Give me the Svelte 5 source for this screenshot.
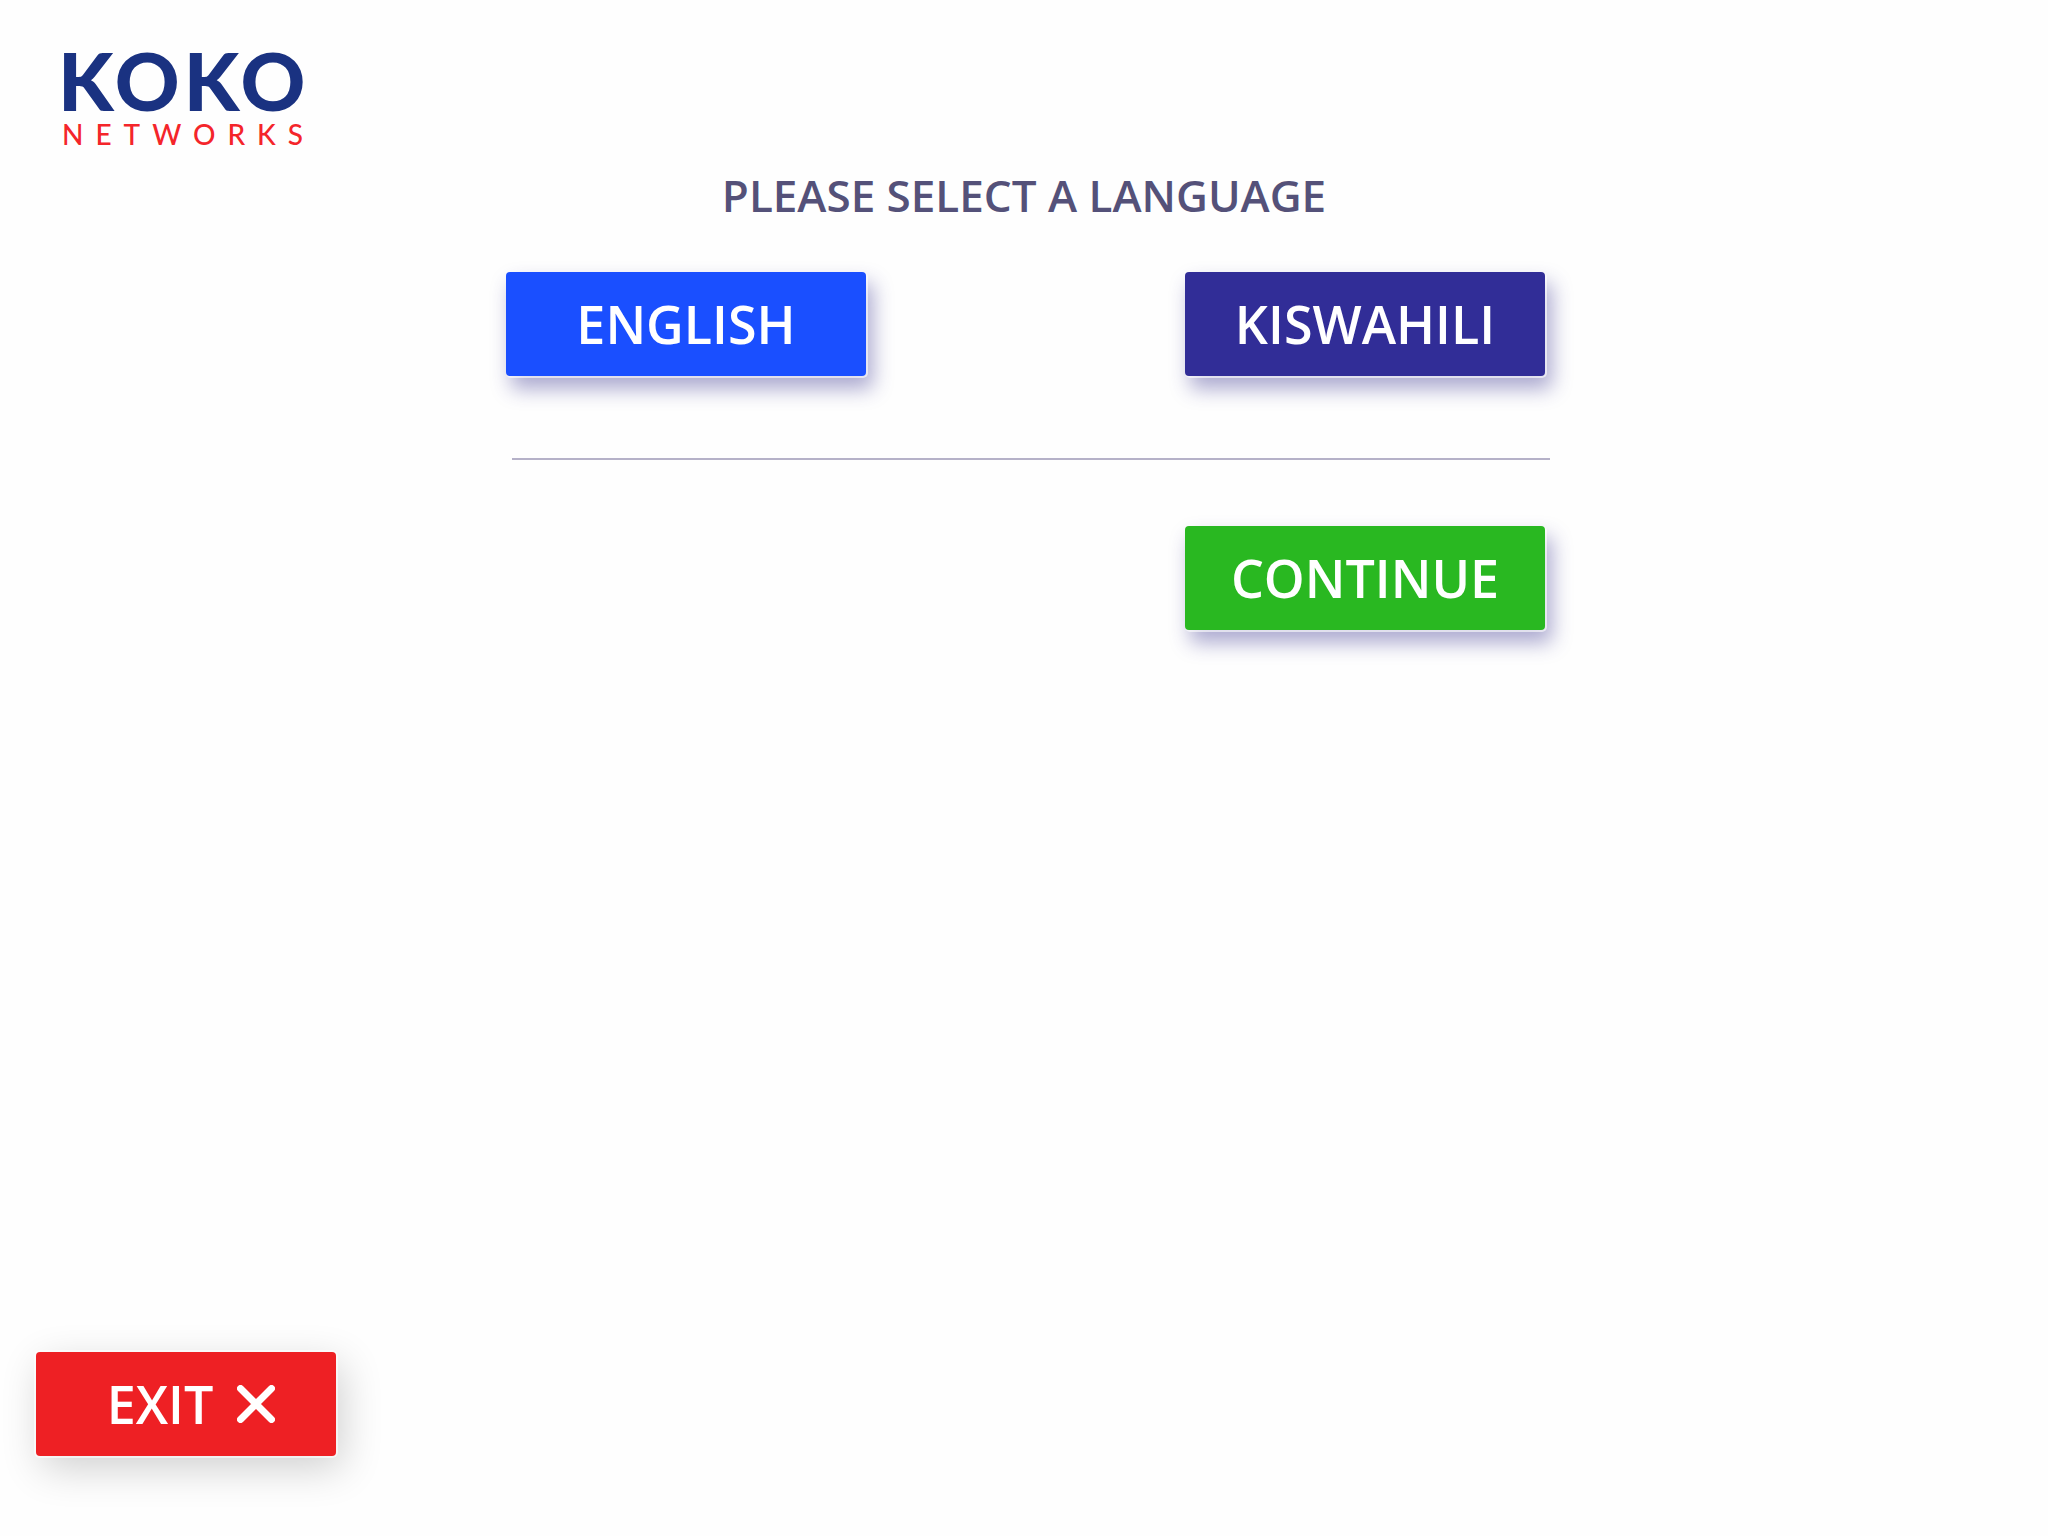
<script>
  const languages = [
    { id: 'en', label: 'ENGLISH' },
    { id: 'sw', label: 'KISWAHILI' }
  ];
  let selected = $state('en');
</script>

<div class="screen">
  <header class="brand" aria-label="Koko Networks">
    <span class="brand-name">KOKO</span>
    <span class="brand-sub">NETWORKS</span>
  </header>

  <main>
    <h1>PLEASE SELECT A LANGUAGE</h1>
    <div class="panel">
      <div class="choices">
        {#each languages as lang (lang.id)}
          <button
            type="button"
            class="btn {lang.id}"
            aria-pressed={selected === lang.id}
            onclick={() => (selected = lang.id)}>{lang.label}</button>
        {/each}
      </div>
      <hr />
      <div class="actions">
        <button type="button" class="btn continue">CONTINUE</button>
      </div>
    </div>
  </main>

  <footer>
    <button type="button" class="btn exit">
      <span>EXIT</span>
      <svg viewBox="0 0 38 38" width="38" height="38" aria-hidden="true">
        <path d="M3.5 3.5 34.5 34.5M34.5 3.5 3.5 34.5" />
      </svg>
    </button>
  </footer>
</div>

<style>
  :global(body) {
    margin: 0;
    background: #fefefe;
  }

  .screen {
    box-sizing: border-box;
    min-height: 100vh;
    display: flex;
    flex-direction: column;
    font-family: 'Open Sans', 'Noto Sans', sans-serif;
  }

  .brand {
    display: flex;
    flex-direction: column;
    align-items: flex-start;
    padding: 42px 58px 0;
    font-family: Lato, sans-serif;
  }

  .brand-name {
    font-size: 80px;
    font-weight: 900;
    line-height: 76px;
    letter-spacing: 4px;
    color: #1a3281;
  }

  .brand-sub {
    padding-left: 4px;
    font-size: 28px;
    font-weight: 500;
    line-height: 32px;
    letter-spacing: 12px;
    color: #f4252a;
  }

  main {
    flex: 1;
    display: flex;
    flex-direction: column;
    align-items: center;
    padding: 15px 24px 0;
  }

  h1 {
    margin: 0;
    font-size: 44px;
    line-height: 60px;
    font-weight: 600;
    color: #545179;
  }

  .panel {
    box-sizing: border-box;
    width: 100%;
    max-width: 1052px;
    padding: 47px 0 0 8px;
  }

  .choices {
    display: flex;
    justify-content: space-between;
    padding-right: 5px;
  }

  .actions {
    display: flex;
    justify-content: flex-end;
    padding-right: 5px;
  }

  hr {
    height: 2px;
    margin: 82px 0 66px 6px;
    border: 0;
    background: #b5b1c8;
  }

  .btn {
    display: flex;
    align-items: center;
    justify-content: center;
    width: 360px;
    height: 104px;
    padding: 0;
    border: 0;
    border-radius: 4px;
    font: inherit;
    font-size: 52px;
    font-weight: 600;
    line-height: 72px;
    color: #fff;
    cursor: pointer;
    box-shadow:
      1px 1px 0 1px rgba(255, 255, 255, 0.6),
      6px 12px 20px 1px rgba(49, 45, 140, 0.4);
  }

  .en {
    background: #1a4fff;
  }

  .sw {
    background: #312d97;
  }

  .continue {
    background: #29b821;
  }

  .exit {
    gap: 24px;
    width: 300px;
    padding-left: 10px;
    background: #ee2024;
    box-shadow:
      0 0 0 2px rgba(255, 255, 255, 0.6),
      6px 12px 40px rgba(0, 0, 0, 0.19);
  }

  .exit path {
    fill: none;
    stroke: #fff;
    stroke-width: 7;
    stroke-linecap: round;
  }

  footer {
    padding: 0 36px 80px;
  }
</style>
